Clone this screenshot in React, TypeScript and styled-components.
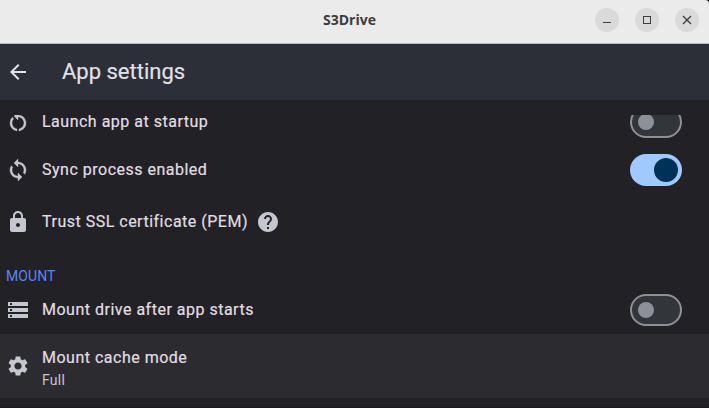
import React from "react";
import styled, { createGlobalStyle } from "styled-components";
import { MdArrowBack, MdRestartAlt, MdSync, MdLock, MdHelp, MdStorage, MdSettings } from "react-icons/md";

const Global = createGlobalStyle`
  * { box-sizing: border-box; }
  body { margin: 0; overflow: hidden; background: #1b1718; font-family: Roboto, sans-serif; }
`;

const Window = styled.div`
  width: 709px;
  height: 408px;
  display: flex;
  flex-direction: column;
  overflow: hidden;
  background: #222126;
  border-bottom: 1px solid #20181c;
  border-top-right-radius: 4px;
`;

const TitleBar = styled.header`
  flex: none;
  height: 44px;
  padding: 0 10px 3px 114px;
  display: grid;
  grid-template-columns: 1fr 104px;
  align-items: center;
  background: #ebebeb;
  border-bottom: 1px solid #bdbdbd;
`;

const WindowTitle = styled.div`
  padding-right: 10px;
  text-align: center;
  font: 700 14px/20px "Open Sans", sans-serif;
  color: #3d3d3d;
`;

const Controls = styled.div`
  display: flex;
  gap: 16px;
`;

const Control = styled.button`
  flex: none;
  width: 24px;
  height: 24px;
  padding: 0;
  border: 0;
  border-radius: 50%;
  background: #dadada;
  color: #3d3d3d;
  svg { display: block; }
`;

const AppBar = styled.div`
  flex: none;
  height: 56px;
  padding-left: 6px;
  display: flex;
  align-items: center;
  gap: 32px;
  background: #2d2f38;
  color: #e3e1e9;
`;

const Heading = styled.h1`
  margin: 0;
  font-size: 22px;
  line-height: 28px;
  font-weight: 400;
  -webkit-text-stroke: 0.15px currentColor;
`;

const List = styled.main`
  flex: 1;
  min-height: 0;
  margin-top: 15px;
  overflow: hidden;
`;

const Items = styled.div`
  margin-top: -17px;
`;

const Row = styled.div<{ $h: number; $active?: boolean }>`
  height: ${(p) => p.$h}px;
  padding: 0 27px 0 6px;
  display: flex;
  align-items: center;
  background: ${(p) => (p.$active ? "#2c2b30" : "transparent")};
  color: #c4c6d0;
  > svg { flex: none; }
`;

const BoldRestart = styled(MdRestartAlt)`
  stroke-width: 0.4px;
  path[fill="none"] { stroke: none; }
`;

const BoldSync = styled(MdSync)`
  stroke-width: 0.4px;
  path[fill="none"] { stroke: none; }
`;

const Texts = styled.div<{ $offset?: number }>`
  flex: 1;
  margin-left: 12px;
  padding-top: ${(p) => p.$offset ?? 0}px;
  display: flex;
  flex-direction: column;
`;

const Label = styled.div`
  display: flex;
  align-items: center;
  gap: 8px;
  font-size: 16px;
  line-height: 24px;
  letter-spacing: 0.5px;
  color: #e0dee3;
  -webkit-text-stroke: 0.2px currentColor;
  svg { color: #c4c6d0; }
`;

const Value = styled.div`
  font-size: 14px;
  line-height: 20px;
  letter-spacing: 0.25px;
`;

const Section = styled.h2`
  margin: 0;
  height: 36px;
  padding: 16px 6px 0;
  font-size: 14px;
  line-height: 20px;
  font-weight: 400;
  letter-spacing: 0.1px;
  color: #5b85f5;
`;

const Track = styled.div<{ $on?: boolean }>`
  flex: none;
  width: 52px;
  height: 32px;
  display: flex;
  align-items: center;
  justify-content: ${(p) => (p.$on ? "flex-end" : "flex-start")};
  padding: ${(p) => (p.$on ? "0 4px" : "0 6px")};
  border-radius: 16px;
  border: ${(p) => (p.$on ? "0" : "2px solid #8e9099")};
  background: ${(p) => (p.$on ? "#a0c9ff" : "#32353a")};
`;

const Thumb = styled.div<{ $on?: boolean }>`
  width: ${(p) => (p.$on ? 24 : 16)}px;
  height: ${(p) => (p.$on ? 24 : 16)}px;
  border-radius: 50%;
  background: ${(p) => (p.$on ? "#003258" : "#8e9099")};
`;

function Switch({ on }: { on?: boolean }) {
  return (
    <Track $on={on} role="switch" aria-checked={!!on}>
      <Thumb $on={on} />
    </Track>
  );
}

export default function App() {
  return (
    <Window>
      <Global />
      <TitleBar>
        <WindowTitle>S3Drive</WindowTitle>
        <Controls>
          <Control aria-label="Minimize">
            <svg width="24" height="24"><path d="M8 14.5h8" stroke="currentColor" /></svg>
          </Control>
          <Control aria-label="Maximize">
            <svg width="24" height="24"><rect x="8.5" y="8.5" width="7" height="7" fill="none" stroke="currentColor" /></svg>
          </Control>
          <Control aria-label="Close">
            <svg width="24" height="24"><path d="M8 8l8 8M16 8l-8 8" stroke="currentColor" strokeWidth="1.3" /></svg>
          </Control>
        </Controls>
      </TitleBar>
      <AppBar>
        <MdArrowBack size={24} />
        <Heading>App settings</Heading>
      </AppBar>
      <List>
        <Items>
          <Row $h={48}>
            <BoldRestart size={24} />
            <Texts><Label>Launch app at startup</Label></Texts>
            <Switch />
          </Row>
          <Row $h={48}>
            <BoldSync size={24} />
            <Texts><Label>Sync process enabled</Label></Texts>
            <Switch on />
          </Row>
          <Row $h={56}>
            <MdLock size={24} />
            <Texts><Label>Trust SSL certificate (PEM)<MdHelp size={24} /></Label></Texts>
          </Row>
          <Section>MOUNT</Section>
          <Row $h={48}>
            <MdStorage size={24} />
            <Texts><Label>Mount drive after app starts</Label></Texts>
            <Switch />
          </Row>
          <Row $h={64} $active>
            <MdSettings size={24} />
            <Texts $offset={4}>
              <Label>Mount cache mode</Label>
              <Value>Full</Value>
            </Texts>
          </Row>
        </Items>
      </List>
    </Window>
  );
}
